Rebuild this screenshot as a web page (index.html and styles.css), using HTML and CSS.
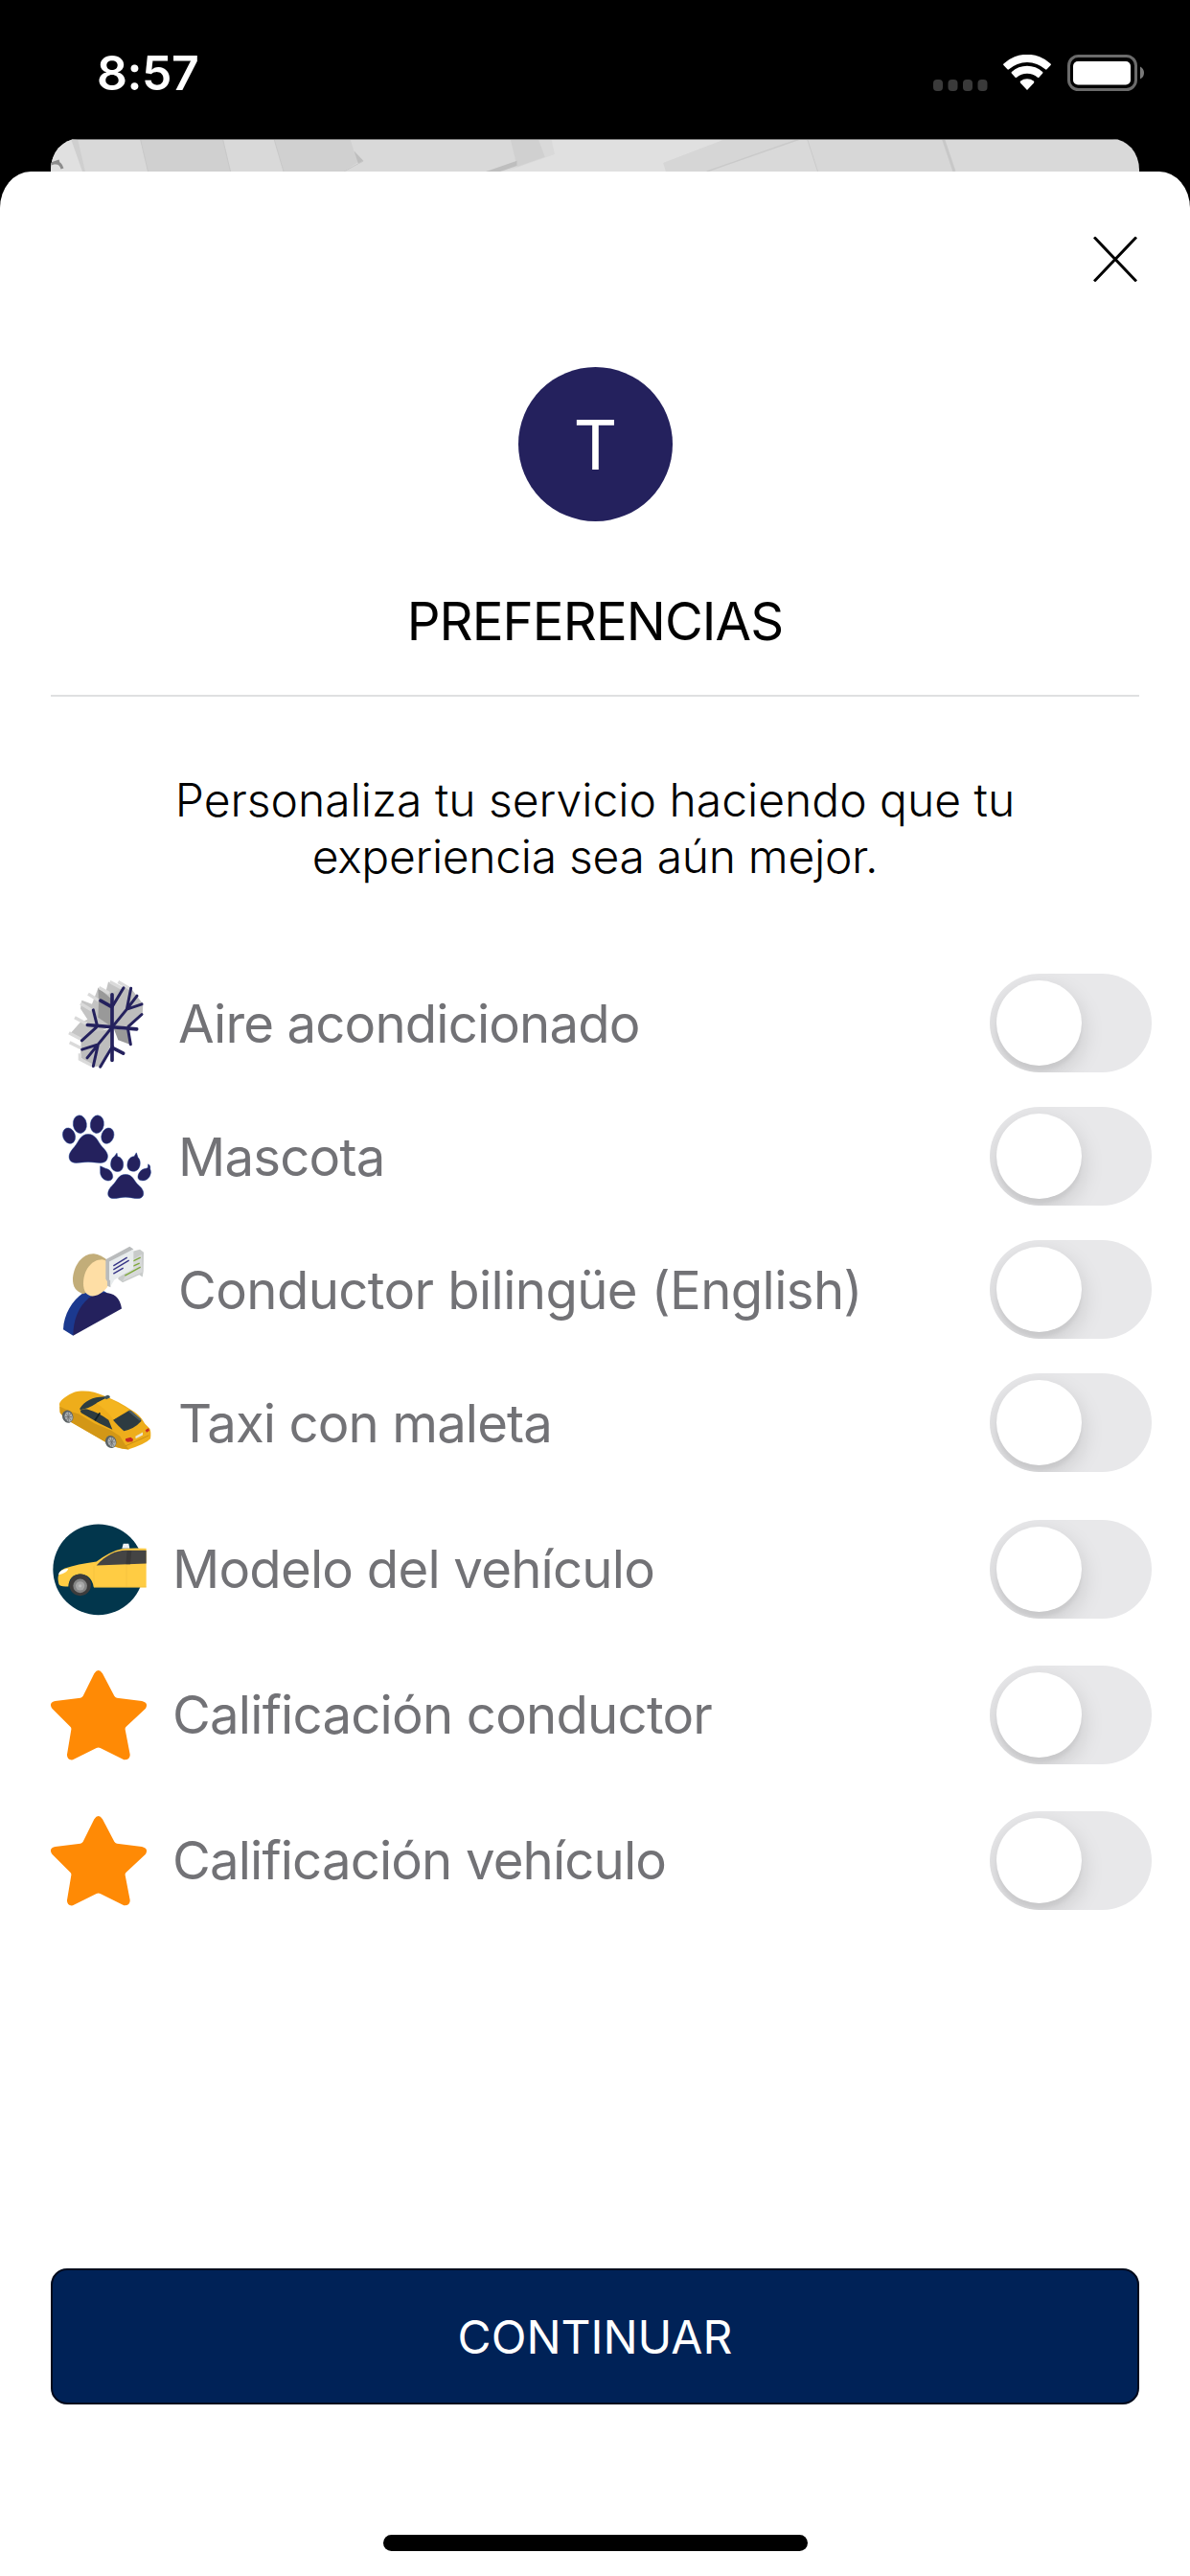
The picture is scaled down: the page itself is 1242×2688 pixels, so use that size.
FILE: index.html
```html
<!DOCTYPE html>
<html lang="es">
<head>
<meta charset="utf-8">
<title>Preferencias</title>
<link rel="stylesheet" href="styles.css">
</head>
<body>
<div class="screen">
  <header class="status">
    <span class="time">8:57</span>
    <div class="status-icons">
      <svg class="signal" viewBox="0 0 57 12"><g fill="#3a3a3a"><rect width="10" height="12" rx="4"/><rect x="15.5" width="10" height="12" rx="4"/><rect x="31" width="10" height="12" rx="4"/><rect x="46.5" width="10" height="12" rx="4"/></g></svg>
      <svg class="wifi" viewBox="0 0 50 37"><g fill="#fff"><path d="M25 37l-7-7.6q-.8-1 .2-1.800a11.200 11.200 0 0 1 13.600 0q1 .8.200 1.800z"/><path d="M8.800 19.500q-.7-.8.100-1.600a24 24 0 0 1 32.200 0q.8.800.1 1.600l-3.800 4.300q-.7.600-1.500 0a16.500 16.500 0 0 0-21.800 0q-.8.600-1.500 0z"/><path d="M.4 11q-.7-.9.100-1.600a36 36 0 0 1 49 0q.8.700.1 1.600l-4 4.300q-.8.700-1.600 0a28.500 28.500 0 0 0-38 0q-.8.700-1.600 0z"/></g></svg>
      <svg class="battery" viewBox="0 0 80 38"><rect x="1.500" y="1.500" width="70" height="35" rx="10" fill="none" stroke="#6b6b6b" stroke-width="3"/><rect x="6" y="7" width="60" height="24.500" rx="5" fill="#fff"/><path d="M76 12.500q4 2 4 6.500t-4 6.500z" fill="#7a7a7a"/></svg>
    </div>
  </header>
  <div class="backdrop">
    <svg viewBox="0 0 1136 34" width="1136" height="34">
      <rect width="1136" height="34" fill="#d9d9d9"/>
      <path d="M0 0h24l12 34H0z" fill="#e0e0e0"/>
      <path d="M21 0h7l8 34h-3z" fill="#cfcfcf"/>
      <path d="M0 26l9-3M4 25q6-1 8 6" fill="none" stroke="#8c8c8c" stroke-width="3"/>
      <path d="M93.500 0h86l8 34h-86zM233 0h79.500l4 13 4.500 11-15.500 10H243z" fill="#d0d0d0"/>
      <path d="M93.500 0l8 34M179.500 0l8 34M233 0l10 34" stroke="#c8c8c8"/>
      <path d="M316.500 12.500l10 10.500-5.500 3z" fill="#bebebe"/>
      <path d="M326 23l-20 11" stroke="#c8c8c8"/>
      <path d="M479.700 0h29l7 18.700-29 10.300z" fill="#d0d0d0"/>
      <path d="M526 16L486 30l-14 4h170l-2.700-9L704.600 0H522.500z" fill="#e0e0e0"/>
      <path d="M486.500 22.700V28L469 34h-15z" fill="#bebebe"/>
      <path d="M704.600 0h77L685 34h-43l-2.700-9z" fill="#d6d6d6"/>
      <path d="M781.800 0l-97 34M789.800 0l11 34" stroke="#cacaca" stroke-width="1.500"/>
      <path d="M790 0h141l12 34H801z" fill="#d7d7d7"/>
      <path d="M931.500 0l11.500 34" stroke="#c8c8c8" stroke-width="3"/>
      <path d="M0 .5h1136" stroke="#777"/>
    </svg>
  </div>
  <main class="sheet">
    <button class="close" aria-label="Cerrar"><svg viewBox="0 0 46 47"><path d="M1 0.500l44 46M45 0.500L1 46.500" stroke="#000" stroke-width="3"/></svg></button>
    <div class="avatar">T</div>
    <h1>PREFERENCIAS</h1>
    <p class="intro"><span>Personaliza tu servicio haciendo que tu</span><br><span class="second">experiencia sea aún mejor.</span></p>
    <ul class="prefs">
      <li>
        <svg viewBox="39 52.500 345 300">
          <path d="M187 92l24 12 8-32 46 18-35 60v60l-94 46-38-20 32-36 24-10-22-34 4-26 32 12z" fill="#c4c4c4"/>
          <path d="M231 108l36-20 23 4 38 50-2 34-44 36-51-2zM228 218v50l-34 68-24 2-38-30 2-50 20-24z" fill="#bdbdbd"/>
          <path d="M187 90l42 36v86l-42-28 2-50zM236 218l46 6 10 46-42-16z" fill="#999"/>
          <path d="M156 110l32 20M132 140l34 20M114 184l38 20M96 232l38 20M98 262l36 18M130 296v18l38 20M224 72l38 20M250 72l38 22M190 90l32 18" stroke="#dadada" stroke-width="10" fill="none"/>
          <g fill="none" stroke="#24215d" stroke-width="9" stroke-linecap="round">
            <path d="M231 112v206M154 207l154 13M231 151l-36-20M231 278l35 18" stroke-width="11"/>
            <path d="M136 256l46-42M194 338l38-64M172 336l15-68 90-110 13-66M267 91l-36 60M172 160l12 48M281 222l8 46M277 158l47-16M277 158l32-42M187 268l-50 16M187 268l-34 42M324 174l-42 38"/>
          </g>
        </svg>
        <span class="w1">Aire acondicionado</span><i class="toggle"></i>
      </li>
      <li>
        <svg viewBox="39 469.500 345 300">
          <g fill="#24215d" stroke="#173b8e" stroke-width="1.500">
            <ellipse cx="130" cy="518" rx="21" ry="28" transform="rotate(-8 130 518)"/><ellipse cx="184" cy="518" rx="21" ry="28" transform="rotate(8 184 518)"/>
            <ellipse cx="96" cy="554" rx="19" ry="25" transform="rotate(-20 96 554)"/><ellipse cx="217" cy="554" rx="19" ry="25" transform="rotate(20 217 554)"/>
            <path d="M156 549c25 0 31 25 44 40 15 15 22 27 14 41-10 15-32 6-58 6s-48 9-57-6c-7-14 1-27 14-41 13-15 18-40 43-40z"/>
            <path d="M238 619l8-11 2 11c12 2 19 14 18 27-1 14-9 21-19 20-14-1-22-13-20-27 1-10 5-17 11-20zM300 619l7-12 5 15c6 5 8 15 6 25-3 12-11 19-22 18-13-1-19-12-17-24 2-14 11-22 21-22zM194 649l16 7c16 3 24 16 23 28-2 9-10 12-19 10-13-4-21-16-20-29zM338 656l5-2 1-11q8 4 6 14 5 12-1 23c-5 10-15 15-25 14-11-1-14-8-11-18 4-11 12-19 25-20z"/>
            <path d="M273 675c23 0 26 20 39 32 14 11 20 23 16 34-8 17-33 5-55 5s-46 12-54-5c-3-12 3-23 15-34 13-12 16-32 39-32z"/>
          </g>
        </svg>
        <span class="w2">Mascota</span><i class="toggle"></i>
      </li>
      <li>
        <svg viewBox="39 46.500 345 300">
          <path d="M78 320c2-48 28-90 62-114 25-14 50-18 76 0l-96 110-11 24z" fill="#1b398f"/>
          <path d="M109 340c0-48 16-92 50-119 38-24 94-26 102 34z" fill="#24215d"/>
          <path d="M108 160c3-43 32-79 66-77q23 3 42 20l-22 86-54 20c-22-7-33-22-32-49z" fill="#c2ad79"/>
          <path d="M141 176c0-42 26-75 59-75q18 3 24 22v50c-10 23-32 41-54 43-20-2-29-16-29-40z" fill="#fedea5"/>
          <path d="M298 75l20-5 12 9-1 60-3 17-10-7-52 24-14-10v-13z" fill="#c8cbca"/><path d="M299 100l25-15 2 56-62 28" fill="#d7d9d9"/>
          <path d="M297 106l23-11M297 122l20-9M271 152l49-27" stroke="#7da83a" stroke-width="4"/>
          <path d="M211 101l75-40 12 8-70 45-2 74-10-4v-14l-5-8z" fill="#b9bbbc"/>
          <path d="M222 108l76-39v61l-60 35-12 20v-18l-4-2z" fill="#e8eced"/>
          <path d="M235 121l43-26M235 133l49-29M235 146l31-18" stroke="#363486" stroke-width="4"/>
        </svg>
        <span class="w3">Conductor bilingüe (English)</span><i class="toggle"></i>
      </li>
      <li>
        <svg viewBox="39 463.500 345 300">
          <path d="M66 554c2-14 38-38 60-40 30-3 55 3 80 14 31 12 61 28 86 45 25 15 33 27 42 43l15 15q5 12 2 31-13 15-70 34-40-3-66-21L110 614q-28-14-42-34z" fill="#eead1b"/>
          <path d="M67 562l40 17 20 6 50 30 52 22 27 18 16 26 12 15q-40-3-74-23l-100-58q-28-14-42-34z" fill="#d39716"/>
          <path d="M130 568c15-25 43-38 78-37l8 2-35 19q-25 17-50 20z" fill="#2d3d41"/>
          <path d="M131 574q12-7 22-4 36 10 67 34l12 30-41-20-57-33z" fill="#2e3c40"/><path d="M177 605l16-24" stroke="#111f24" stroke-width="5"/>
          <path d="M234 604l52-31 37 34q-24 26-55 31-15-12-34-34z" fill="#2d3b41"/><path d="M290 574l33 28-6 4-36-30z" fill="#4c5d61"/>
          <path d="M181 551l35-18 68 38-49 31q-25-35-54-51z" fill="#f4b520"/>
          <path d="M203 532l14-6q8 1 8 7l-12 6z" fill="#43565c"/>
          <g><ellipse cx="92" cy="593" rx="17" ry="20" fill="#5b6264" transform="rotate(-20 92 593)"/><ellipse cx="95" cy="594" rx="12" ry="16" fill="#aeb3b5" transform="rotate(-20 95 594)"/><path d="M84 594h21M94 578v31M86 583l17 23M102 582l-15 24" stroke="#666" stroke-width="2"/></g>
          <g><ellipse cx="227" cy="672" rx="17" ry="20" fill="#5b6264" transform="rotate(-20 227 672)"/><ellipse cx="230" cy="673" rx="12" ry="16" fill="#aeb3b5" transform="rotate(-20 230 673)"/><path d="M220 673h20M230 657v30M222 662l15 23M237 661l-14 24" stroke="#666" stroke-width="2"/></g>
          <path d="M273 662l16-4 8 6-2 7-16 2-6-5zM335 635l10-6 3 8-9 6z" fill="#c62a24"/><path d="M304 655l23-13v9l-22 11z" fill="#ebe6d3"/>
          <path d="M273 685l73-33" stroke="#cb9014" stroke-width="3"/>
        </svg>
        <span class="w4">Taxi con maleta</span><i class="toggle"></i>
      </li>
      <li class="tall first-tall">
        <svg viewBox="39 49.500 300 300">
          <circle cx="188" cy="202" r="142" fill="#02364c"/>
          <path d="M262 136l4-15h17l3 15z" fill="#eef1f3"/>
          <path d="M62 236c-2-18 5-31 21-38q39-13 99-21 42-32 79-40 35-3 77-1v122H174q-8-42-44-42-34 3-36 39-28 2-30-8z" fill="#ffcc43"/>
          <path d="M182 189c31-33 60-47 92-47h64v41z" fill="#444"/><path d="M278 143h14l-4 42h-14z" fill="#393939"/>
          <path d="M174 256V190M276 186v70M174 256h164" fill="none" stroke="#edbc3c" stroke-width="1.500"/>
          <path d="M63 218q3-17 31-19-4 15-31 19z" fill="#fff"/>
          <circle cx="131" cy="250" r="34" fill="#3d3c3c"/><circle cx="131" cy="253" r="22" fill="#848484"/><circle cx="131" cy="253" r="14" fill="#a7a7a7"/><circle cx="131" cy="253" r="5" fill="#c0c0c0"/>
        </svg>
        <span class="w5">Modelo del vehículo</span><i class="toggle"></i>
      </li>
      <li class="tall">
        <svg viewBox="39 504 300 300"><path d="M175 526q13-20 26 0l37 70q3 5 8 6l78 10q22 5 12 23l-61 57q-4 4-3 9l15 78q1 18-19 17l-74-37q-6-3-12 0l-74 37q-19 2-18-17l13-78q1-5-3-9l-57-57q-12-18 10-23l79-10q5-1 8-6z" fill="#ff8a05"/></svg>
        <span class="w6">Calificación conductor</span><i class="toggle"></i>
      </li>
      <li class="tall">
        <svg viewBox="39 504 300 300"><path d="M175 526q13-20 26 0l37 70q3 5 8 6l78 10q22 5 12 23l-61 57q-4 4-3 9l15 78q1 18-19 17l-74-37q-6-3-12 0l-74 37q-19 2-18-17l13-78q1-5-3-9l-57-57q-12-18 10-23l79-10q5-1 8-6z" fill="#ff8a05"/></svg>
        <span class="w7">Calificación vehículo</span><i class="toggle"></i>
      </li>
    </ul>
    <button class="continue">CONTINUAR</button>
    <div class="home"></div>
  </main>
</div>
</body>
</html>
```

FILE: styles.css
```css
* { box-sizing: border-box; }
body { margin: 0; background: #000; font-family: Inter, "Liberation Sans", sans-serif; }
button { border: 0; padding: 0; font: inherit; }
svg { display: block; }
.screen { width: 1242px; height: 2688px; display: flex; flex-direction: column; overflow: hidden; }
.status { height: 145px; flex: none; padding: 0 48px 0 101px; display: flex; justify-content: space-between; }
.time { font-size: 50px; font-weight: 600; color: #fff; line-height: 60px; padding-top: 46px; letter-spacing: -.5px; }
.status-icons { display: flex; padding-top: 57px; }
.signal { width: 57px; height: 12px; margin-top: 26px; }
.wifi { width: 50px; height: 37px; margin-left: 16px; }
.battery { width: 80px; height: 38px; margin-left: 17px; }
.backdrop { flex: none; margin: 0 53px; height: 34px; overflow: hidden; border-radius: 28px 28px 0 0 / 32px 32px 0 0; }
.sheet { flex: 1; background: #fff; border-radius: 32px 32px 0 0 / 38px 38px 0 0; display: flex; flex-direction: column; align-items: center; }
.close { align-self: flex-end; margin: 68px 55px 0 0; background: none; }
.close svg { width: 46px; height: 47px; }
.avatar { flex: none; width: 161px; height: 161px; margin-top: 89px; padding-left: 1px; border-radius: 50%; background: #24215d; color: #fff; font-size: 71px; font-weight: 400; line-height: 162px; text-align: center; }
h1 { width: 1136px; height: 183px; margin: 0; padding-top: 71px; border-bottom: 2px solid #dfe0e1; font-size: 54.5px; font-weight: 400; line-height: 66px; letter-spacing: -.9px; text-align: center; }
.intro { margin: 79px 0 0; font-size: 48px; font-weight: 300; line-height: 58.5px; text-align: center; }
.intro .second { letter-spacing: -.3px; }
.prefs { list-style: none; width: 100%; margin: 75px 0 0; padding: 0 40px 0 53px; }
.prefs li { height: 139px; display: flex; align-items: center; font-size: 54.5px; color: #727276; line-height: 66px; }
.prefs svg { flex: none; width: 115px; height: 100px; margin-right: 18px; }
.prefs .tall { height: 152px; }
.prefs .tall svg { width: 100px; margin-right: 27px; }
.prefs .first-tall { margin-top: 7px; }
.w1, .w7 { letter-spacing: -.85px; }
.w2, .w5, .w6 { letter-spacing: -.78px; }
.w3 { letter-spacing: -.6px; }
.w4 { letter-spacing: -.9px; }
.toggle { flex: none; width: 169px; height: 103px; margin-left: auto; padding: 7px; border-radius: 52px; background: #e8e8ea; overflow: hidden; }
.toggle::before { content: ""; display: block; width: 89px; height: 89px; border-radius: 50%; background: #fff; box-shadow: 0 9px 24px rgba(0,0,0,.15), 0 6px 3px rgba(0,0,0,.03); }
.continue { width: 1136px; height: 142px; flex: none; margin-top: auto; padding-top: 2px; border: 2px solid #000a1c; border-radius: 17px; background: #002257; color: #fff; font-size: 48px; line-height: 58px; }
.home { flex: none; width: 443px; height: 17px; margin: 136px 0 26px; border-radius: 9px; background: #000; }
```
